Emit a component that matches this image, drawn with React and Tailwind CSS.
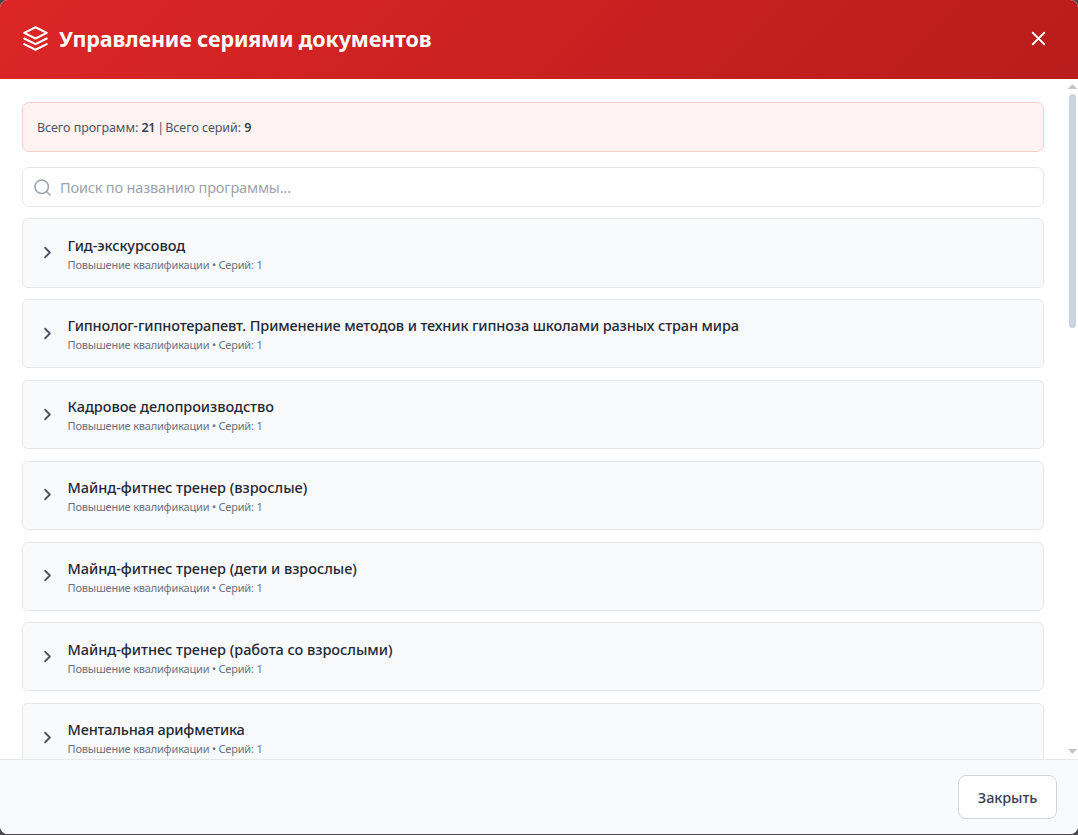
import React from "react";

const programs = [
  { title: "Гид-экскурсовод", spacing: "tracking-[-0.08px]" },
  { title: "Гипнолог-гипнотерапевт. Применение методов и техник гипноза школами разных стран мира", spacing: "tracking-[-0.13px]" },
  { title: "Кадровое делопроизводство", spacing: "tracking-[-0.05px]" },
  { title: "Майнд-фитнес тренер (взрослые)", spacing: "tracking-[-0.03px]" },
  { title: "Майнд-фитнес тренер (дети и взрослые)", spacing: "tracking-[-0.03px]" },
  { title: "Майнд-фитнес тренер (работа со взрослыми)", spacing: "tracking-[-0.03px]" },
  { title: "Ментальная арифметика", spacing: "tracking-[-0.19px]" },
];

function LayersIcon() {
  return (
    <svg className="mb-[3px] size-[27px] shrink-0" viewBox="0 0 24 24" fill="none" stroke="currentColor" strokeWidth="1.9" strokeLinecap="round" strokeLinejoin="round">
      <path d="M12 2 2 7l10 5 10-5-10-5z" />
      <path d="m2 12 10 5 10-5" />
      <path d="m2 17 10 5 10-5" />
    </svg>
  );
}

function CloseIcon() {
  return (
    <svg className="size-[23px]" viewBox="0 0 24 24" fill="none" stroke="currentColor" strokeWidth="1.9" strokeLinecap="round">
      <path d="M18 6 6 18M6 6l12 12" />
    </svg>
  );
}

function SearchIcon() {
  return (
    <svg className="size-[19px] shrink-0 text-[#9ca3af]" viewBox="0 0 24 24" fill="none" stroke="currentColor" strokeWidth="2" strokeLinecap="round">
      <circle cx="11" cy="11" r="8.5" />
      <path d="m21.5 21.5-4.5-4.5" />
    </svg>
  );
}

function ChevronIcon() {
  return (
    <svg className="mb-px size-[19px] shrink-0 text-[#4b5563]" viewBox="0 0 24 24" fill="none" stroke="currentColor" strokeWidth="2.3" strokeLinecap="round" strokeLinejoin="round">
      <path d="m9 18 6-6-6-6" />
    </svg>
  );
}

function ProgramRow({ title, spacing }) {
  return (
    <div className="flex h-[69.2px] shrink-0 items-center rounded-[6px] border border-[#e5e7eb] bg-[#f9fafb] pl-[15px]">
      <ChevronIcon />
      <div className="ml-[10.6px] whitespace-nowrap pt-[1.4px]">
        <div className={"text-[14.5px] leading-[21px] font-medium text-[#1f2937] " + spacing}>{title}</div>
        <div className="text-[11px] leading-[17px] tracking-[-0.2px] text-[#6b7280]">Повышение квалификации • Серий: 1</div>
      </div>
    </div>
  );
}

function Scrollbar() {
  return (
    <div className="flex w-[11px] shrink-0 flex-col items-center pt-[5px] pb-[5px]">
      <svg className="h-[5px] w-[9px] shrink-0" viewBox="0 0 9 5"><path d="M4.5 0 9 5H0z" fill="#c3c5ca" /></svg>
      <div className="mt-[5px] h-[234px] w-[7px] rounded-full bg-[#cbd5e1]" />
      <svg className="mt-auto h-[5px] w-[9px] shrink-0" viewBox="0 0 9 5"><path d="M0 0h9L4.500 5z" fill="#c3c5ca" /></svg>
    </div>
  );
}

export default function App() {
  return (
    <div className="h-[835px] w-[1078px] overflow-hidden bg-[#4b4b4d] font-['Noto_Sans','Open_Sans',sans-serif]">
      <div className="flex h-[834px] flex-col overflow-hidden rounded-[8px] bg-white">
        <header className="flex h-[79px] shrink-0 items-center bg-linear-135 from-[#dc2626] to-[#b91c1c] pr-[28px] pl-[22px] text-white">
          <LayersIcon />
          <h1 className="mb-[2px] ml-[10px] text-[21.5px] leading-none font-bold tracking-[-0.14px] whitespace-nowrap">Управление сериями документов</h1>
          <button className="mb-[2px] ml-auto" aria-label="Закрыть"><CloseIcon /></button>
        </header>
        <main className="flex min-h-0 flex-1">
          <div className="flex min-w-0 flex-1 flex-col overflow-hidden pt-[23px] pr-[23px] pl-[22px]">
            <div className="flex h-[50px] shrink-0 items-center rounded-[7px] border border-[#f3cfd0] bg-[#fef2f2] pt-[2px] pl-[14px] text-[12.5px] tracking-[-0.07px] whitespace-pre text-[#4b5563]">
              <p>Всего программ: <strong className="font-semibold tracking-[-0.4px] text-[#374151]">21</strong><span className="tracking-[-1px]"> | </span>Всего серий: <strong className="font-semibold text-[#374151]">9</strong></p>
            </div>
            <div className="mt-[15px] flex h-[40px] shrink-0 items-center rounded-[7px] border border-[#e5e7eb] bg-white pl-[10px]">
              <SearchIcon />
              <input className="ml-[8px] flex-1 pt-[2px] text-[14.5px] tracking-[-0.17px] outline-none placeholder:text-[#9ca3af]" placeholder="Поиск по названию программы..." />
            </div>
            <div className="mt-[11.400px] flex min-h-0 flex-1 flex-col gap-[11.6px] overflow-hidden">
              {programs.map((p) => <ProgramRow key={p.title} {...p} />)}
            </div>
          </div>
          <Scrollbar />
        </main>
        <footer className="flex h-[75px] shrink-0 items-center justify-end border-t border-[#e5e7eb] bg-[#f9fafb] pr-[21px]">
          <button className="h-[44px] w-[99px] rounded-[8px] border border-[#d1d5db] bg-white pt-[2px] text-[14.5px] font-medium tracking-[-0.1px] text-[#374151]">Закрыть</button>
        </footer>
      </div>
    </div>
  );
}
